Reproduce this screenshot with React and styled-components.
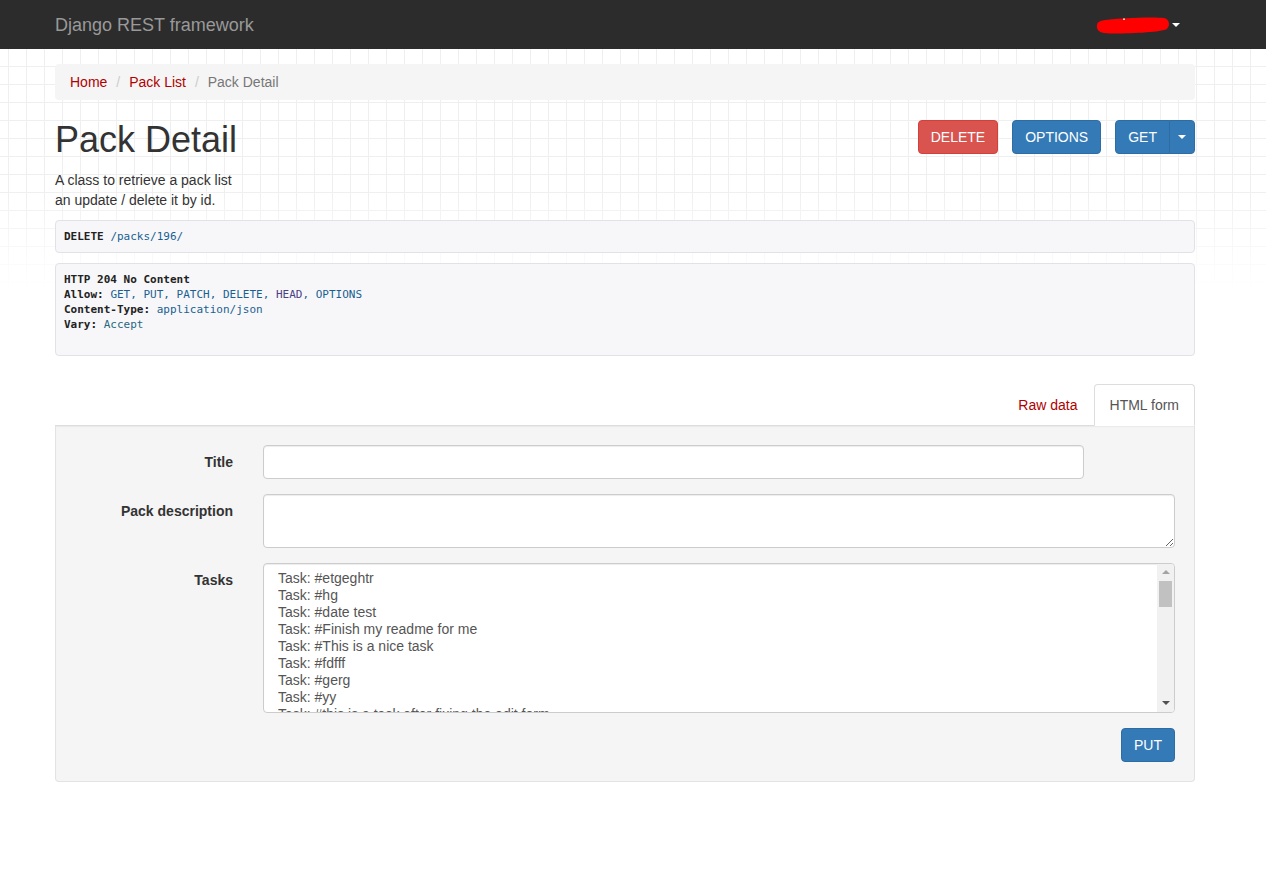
import React from 'react';
import styled, { createGlobalStyle } from 'styled-components';

const GlobalStyle = createGlobalStyle`
  * { box-sizing: border-box; }
  html, body { margin: 0; padding: 0; background: #fff; }
  body {
    font-family: "Liberation Sans", Arial, Helvetica, sans-serif;
    font-size: 14px;
    line-height: 20px;
    color: #333;
  }
`;

const LINK = '#b00000';

const Navbar = styled.header`
  height: 49px;
  background: #2c2c2c;
  display: flex;
  align-items: center;
`;

const NavInner = styled.div`
  margin-left: 55px;
  width: 1125px;
  display: flex;
  align-items: center;
  justify-content: space-between;
`;

const Brand = styled.a`
  font-size: 18px;
  line-height: 20px;
  color: #999;
  text-decoration: none;
`;

const UserMenu = styled.div`
  display: flex;
  align-items: center;
  gap: 2px;
  padding-top: 1px;
`;

const Caret = styled.span`
  display: inline-block;
  width: 0;
  height: 0;
  border-top: 4px solid ${(p) => p.$color || '#fff'};
  border-left: 4px solid transparent;
  border-right: 4px solid transparent;
  vertical-align: middle;
`;

const Page = styled.main`
  min-height: calc(100vh - 49px);
  background-image:
    linear-gradient(to bottom, rgba(255,255,255,0) 140px, #fff 240px),
    linear-gradient(to right, #efefef 1px, transparent 1px),
    linear-gradient(to bottom, #efefef 1px, transparent 1px);
  background-size: 100% 100%, 18px 18px, 18px 18px;
  background-position: 0 0, 8px 17px, 8px 17px;
  background-repeat: no-repeat, repeat, repeat;
  padding-top: 15px;
  padding-bottom: 40px;
`;

const Container = styled.div`
  margin-left: 55px;
  width: 1140px;
`;

const Breadcrumb = styled.nav`
  background: #f5f5f5;
  border-radius: 4px;
  padding: 8px 15px;
  margin-bottom: 20px;
  display: flex;
  align-items: center;
`;

const Crumb = styled.a`
  color: ${(p) => (p.$active ? '#777' : LINK)};
  text-decoration: none;
`;

const CrumbSep = styled.span`
  color: #ccc;
  padding: 0 5px;
  margin-left: 4px;
  white-space: pre;
`;

const HeaderRow = styled.div`
  display: flex;
  justify-content: space-between;
  align-items: flex-start;
`;

const Title = styled.h1`
  margin: 0 0 10px;
  font-size: 36px;
  line-height: 39.6px;
  font-weight: 500;
  color: #333;
`;

const Actions = styled.div`
  display: flex;
  gap: 14px;
`;

const Button = styled.button`
  font-family: inherit;
  font-size: 14px;
  line-height: 20px;
  padding: 6px 12px;
  height: 34px;
  border-radius: ${(p) => p.$radius || '4px'};
  border: 1px solid ${(p) => (p.$variant === 'danger' ? '#d43f3a' : '#2e6da4')};
  background: ${(p) => (p.$variant === 'danger' ? '#d9534f' : '#337ab7')};
  color: #fff;
  cursor: pointer;
  display: inline-flex;
  align-items: center;
  justify-content: center;
`;

const SplitGroup = styled.div`
  display: flex;
`;

const CaretButton = styled(Button)`
  padding: 6px 8px;
  margin-left: -1px;
`;

const Description = styled.p`
  margin: 0 0 10px;
`;

const Pre = styled.div`
  margin: 0 0 10px;
  padding: 8px 8px ${(p) => (p.$trailing ? '23px' : '8px')};
  font-family: "DejaVu Sans Mono", Menlo, Consolas, monospace;
  font-size: 11px;
  line-height: 15px;
  color: #333;
  background: #f7f7f9;
  border: 1px solid #e1e1e8;
  border-radius: 4px;
  white-space: pre;
`;

const PreLine = styled.div``;

const Key = styled.b`
  font-weight: bold;
  color: #222;
`;

const Lit = styled.span`
  color: ${(p) => p.$color || '#195f91'};
`;

const TabBar = styled.div`
  margin-top: 28px;
  display: flex;
  justify-content: flex-end;
  border-bottom: 1px solid #ddd;
`;

const Tab = styled.a`
  padding: 10px 15px;
  line-height: 20px;
  border: 1px solid ${(p) => (p.$active ? '#ddd' : 'transparent')};
  border-bottom-color: transparent;
  border-radius: 4px 4px 0 0;
  margin-bottom: -1px;
  background: ${(p) => (p.$active ? '#fff' : 'transparent')};
  color: ${(p) => (p.$active ? '#555' : LINK)};
  text-decoration: none;
`;

const Well = styled.section`
  background: #f5f5f5;
  border: 1px solid #e3e3e3;
  border-top: 0;
  border-radius: 0 0 4px 4px;
  padding: 19px;
  box-shadow: inset 0 1px 1px rgba(0, 0, 0, 0.05);
`;

const FormRow = styled.div`
  display: grid;
  grid-template-columns: 158px 1fr;
  column-gap: 30px;
  margin-bottom: 15px;
`;

const Label = styled.label`
  font-weight: bold;
  text-align: right;
  padding-top: 7px;
  line-height: 20px;
  color: #333;
`;

const controlBase = `
  font-family: "Liberation Sans", Arial, sans-serif;
  font-size: 14px;
  line-height: 20px;
  color: #555;
  background: #fff;
  border: 1px solid #ccc;
  border-radius: 4px;
  box-shadow: inset 0 1px 1px rgba(0, 0, 0, 0.075);
  outline: none;
`;

const TextInput = styled.input`
  ${controlBase}
  width: ${(p) => p.$width || '100%'};
  height: 34px;
  padding: 6px 12px;
`;

const TextArea = styled.textarea`
  ${controlBase}
  display: block;
  width: 100%;
  height: 54px;
  padding: 6px 12px;
  resize: vertical;
`;

const ListBox = styled.div`
  ${controlBase}
  height: 150px;
  display: flex;
  overflow: hidden;
`;

const Options = styled.div`
  flex: 1;
  padding: 6px 12px;
  overflow: hidden;
`;

const Option = styled.div`
  height: 17px;
  line-height: 17px;
  padding: 0 2px;
  white-space: nowrap;
  color: #555;
`;

const Scrollbar = styled.div`
  width: 17px;
  background: #f1f1f1;
  display: flex;
  flex-direction: column;
  align-items: center;
`;

const ScrollArrow = styled.div`
  width: 17px;
  height: 17px;
  display: flex;
  align-items: center;
  justify-content: center;
`;

const ArrowShape = styled.span`
  width: 0;
  height: 0;
  border-left: 4px solid transparent;
  border-right: 4px solid transparent;
  ${(p) =>
    p.$dir === 'up'
      ? `border-bottom: 4px solid ${p.$color};`
      : `border-top: 4px solid ${p.$color};`}
`;

const Thumb = styled.div`
  width: 13px;
  height: 26px;
  background: #c1c1c1;
`;

const Spacer = styled.div`
  flex: 1;
`;

const SubmitRow = styled.div`
  display: flex;
  justify-content: flex-end;
`;

const tasks = [
  'Task: #etgeghtr',
  'Task: #hg',
  'Task: #date test',
  'Task: #Finish my readme for me',
  'Task: #This is a nice task',
  'Task: #fdfff',
  'Task: #gerg',
  'Task: #yy',
  'Task: #this is a task after fixing the edit form',
];

function Redaction() {
  return (
    <svg width="74" height="17" viewBox="0 0 74 17" aria-hidden="true">
      <path
        d="M1 8 C1 3 10 2.5 28 1.5 C44 0.5 60 0 68 1 C74 2 74.5 10 70 12.5 C60 15.5 36 16.5 14 16.5 C4 16.5 0 13.5 1 8 Z"
        fill="#ff0000"
      />
      <circle cx="28" cy="2.2" r="0.9" fill="#fff" />
    </svg>
  );
}

export default function App() {
  return (
    <>
      <GlobalStyle />
      <Navbar>
        <NavInner>
          <Brand href="#">Django REST framework</Brand>
          <UserMenu>
            <Redaction />
            <Caret />
          </UserMenu>
        </NavInner>
      </Navbar>
      <Page>
        <Container>
          <Breadcrumb>
            <Crumb href="#">Home</Crumb>
            <CrumbSep>{'/\u00a0'}</CrumbSep>
            <Crumb href="#">Pack List</Crumb>
            <CrumbSep>{'/\u00a0'}</CrumbSep>
            <Crumb $active>Pack Detail</Crumb>
          </Breadcrumb>

          <HeaderRow>
            <Title>Pack Detail</Title>
            <Actions>
              <Button $variant="danger">DELETE</Button>
              <Button>OPTIONS</Button>
              <SplitGroup>
                <Button $radius="4px 0 0 4px">GET</Button>
                <CaretButton $radius="0 4px 4px 0">
                  <Caret />
                </CaretButton>
              </SplitGroup>
            </Actions>
          </HeaderRow>

          <Description>
            A class to retrieve a pack list
            <br />
            an update / delete it by id.
          </Description>

          <Pre>
            <PreLine>
              <Key>DELETE</Key> <Lit>/packs/196/</Lit>
            </PreLine>
          </Pre>

          <Pre $trailing>
            <PreLine>
              <Key>HTTP 204 No Content</Key>
            </PreLine>
            <PreLine>
              <Key>Allow:</Key> <Lit>GET, PUT, PATCH, DELETE, </Lit>
              <Lit $color="#4b3f86">HEAD</Lit>
              <Lit>, OPTIONS</Lit>
            </PreLine>
            <PreLine>
              <Key>Content-Type:</Key> <Lit>application/json</Lit>
            </PreLine>
            <PreLine>
              <Key>Vary:</Key> <Lit $color="#27677f">Accept</Lit>
            </PreLine>
          </Pre>

          <TabBar>
            <Tab href="#">Raw data</Tab>
            <Tab $active>HTML form</Tab>
          </TabBar>
          <Well>
            <FormRow>
              <Label>Title</Label>
              <div>
                <TextInput type="text" $width="821px" />
              </div>
            </FormRow>
            <FormRow>
              <Label>Pack description</Label>
              <div>
                <TextArea />
              </div>
            </FormRow>
            <FormRow>
              <Label>Tasks</Label>
              <ListBox role="listbox">
                <Options>
                  {tasks.map((t) => (
                    <Option key={t} role="option">
                      {t}
                    </Option>
                  ))}
                </Options>
                <Scrollbar>
                  <ScrollArrow>
                    <ArrowShape $dir="up" $color="#a3a3a3" />
                  </ScrollArrow>
                  <Thumb />
                  <Spacer />
                  <ScrollArrow>
                    <ArrowShape $dir="down" $color="#505050" />
                  </ScrollArrow>
                </Scrollbar>
              </ListBox>
            </FormRow>
            <SubmitRow>
              <Button>PUT</Button>
            </SubmitRow>
          </Well>
        </Container>
      </Page>
    </>
  );
}
